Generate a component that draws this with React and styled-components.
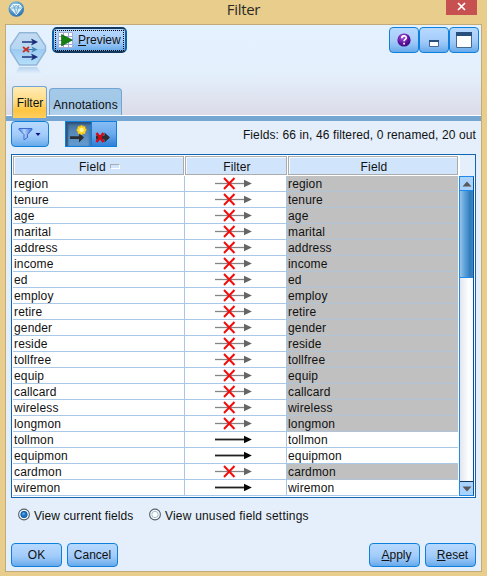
import React from 'react';
import styled, { createGlobalStyle, css } from 'styled-components';

const Global = createGlobalStyle`
  * { box-sizing: border-box; }
  body { margin: 0; background: #e8cd8c; }
  svg { display: block; flex: none; }
`;

const Window = styled.div`
  width: 487px;
  height: 576px;
  background: #e8cd8c;
  padding: 0 5px 4px;
  font: 12px/14px 'Liberation Sans', Arial, sans-serif;
  color: #111;
  display: flex;
  flex-direction: column;
  overflow: hidden;
`;

const TitleBar = styled.header`
  height: 24px;
  flex: none;
  display: grid;
  grid-template-columns: 31px 1fr 31px;
  align-items: start;
`;
const Logo = styled.div`
  padding: 1px 0 0 3px;
`;
const Title = styled.h1`
  margin: 0;
  font: 15px/18px 'Open Sans', 'Noto Sans', sans-serif;
  letter-spacing: -0.3px;
  text-align: center;
  color: #2c2a26;
`;
const Close = styled.button`
  width: 31px;
  height: 15px;
  border: 0;
  padding: 0 0 3px 11px;
  margin-left: -5px;
  background: #c75050;
`;

const Panel = styled.main`
  width: 477px;
  height: 548px;
  border: 1px solid #c3ab79;
  background: #e4effb;
  display: flex;
  flex-direction: column;
`;

const Top = styled.section`
  height: 91px;
  flex: none;
  display: flex;
  flex-direction: column;
  justify-content: space-between;
  background: linear-gradient(#e4f1fe 0, #e4effc 55%, #dcdbe8 100%);
  border-bottom: 1px solid #fff;
`;
const TopRow = styled.div`
  display: flex;
  padding: 2px 2px 0 3px;
`;
const NodeIcon = styled.div`
  width: 43px;
  height: 44px;
  padding: 4px 0 0;
`;
const Spacer = styled.div`
  flex: 1;
`;

const Button = styled.button`
  width: ${(p) => p.$w}px;
  height: ${(p) => p.$h}px;
  padding: ${(p) => p.$pad || '0'};
  display: flex;
  align-items: center;
  justify-content: center;
  font: inherit;
  color: #111;
  border: 1px solid #0d80dc;
  border-radius: 4px;
  background: linear-gradient(#b7d9ff 0%, #a5cdfa 50%, #8fc1f5 72%, #66a9ea 100%);
`;
const PreviewButton = styled(Button)`
  border: 2px solid #12385f;
  border-left-color: #0d62ad;
  border-right-color: #0d62ad;
  border-radius: 5px;
`;
const Focus = styled.span`
  width: 69px;
  height: 21px;
  border: 1px dotted #000;
  display: flex;
  align-items: center;
  gap: 4px;
  padding-left: 2px;
`;
const WindowButtons = styled.div`
  display: flex;
`;

const Tabs = styled.nav`
  display: flex;
  align-items: flex-end;
  padding-left: 6px;
  gap: 2px;
`;
const Tab = styled.div`
  display: flex;
  justify-content: center;
  border: 1px solid #70a5d5;
  border-bottom: 0;
  ${(p) =>
    p.$active
      ? css`
          width: 35px;
          height: 32px;
          margin-bottom: -3px;
          padding: 9px 0 0 1px;
          border-radius: 3px 3px 0 0;
          background: linear-gradient(#ffebb4, #ffdc84 45%, #ffc541 75%, #ffce5e);
          position: relative;
        `
      : css`
          width: 73px;
          height: 27px;
          padding-top: 9px;
          letter-spacing: 0.1px;
          border-radius: 4px 4px 0 0;
          background: linear-gradient(#a5cae9, #a1c7e7 60%, #b4d3ec);
        `}
`;
const Band = styled.div`
  height: 5px;
  flex: none;
  background: #74a5d3;
`;

const Toolbar = styled.div`
  height: 33px;
  flex: none;
  display: flex;
  padding: 0 5px;
`;
const ToggleGroup = styled.div`
  display: flex;
  width: 52px;
  height: 26px;
  margin-left: 16px;
  border: 1px solid #0c7fe0;
`;
const Toggle = styled.button`
  flex: 1;
  border: 0;
  padding: 0;
  background: ${(p) =>
    p.$on
      ? 'linear-gradient(#416991, #5387b9 40%, #659ed2)'
      : 'linear-gradient(#86bdf4, #6aaaec 50%, #2f7ed8)'};
  box-shadow: ${(p) => (p.$on ? 'inset 2px 2px 2px #2d5278, inset -2px 0 2px #4476a8' : 'inset 1px 0 #0c7fe0')};
`;
const Summary = styled.div`
  margin: 7px 0 0 auto;
  white-space: nowrap;
  letter-spacing: 0.11px;
`;

const Table = styled.section`
  width: 465px;
  height: 344px;
  flex: none;
  margin-left: 5px;
  border: 1px solid #1166b4;
  background: #fff;
  display: flex;
`;
const Grid = styled.div`
  width: 447px;
  padding-left: 1px;
`;
const HeaderRow = styled.div`
  height: 21px;
  padding-top: 1px;
  display: grid;
  grid-template-columns: 171px 102px 170px;
  gap: 1px;
`;
const HeaderCell = styled.div`
  height: 19px;
  border: 1px solid #acacac;
  box-shadow: inset 1px 1px #f5faff;
  background: #d0e4fc;
  letter-spacing: 0.15px;
  padding: 2px 0 0 2px;
  display: flex;
  align-items: center;
  justify-content: center;
  gap: 4px;
`;
const SortMark = styled.i`
  width: 10px;
  height: 5px;
  border: 1px solid #a9adb3;
  border-right-color: #fff;
  border-bottom-color: #fff;
`;
const Row = styled.div`
  height: 16px;
  display: grid;
  grid-template-columns: 172px 102px 171px;
`;
const Cell = styled.div`
  height: 16px;
  border-right: ${(p) => (p.$last ? '0' : '1px solid #a9c8e6')};
  border-bottom: 1px solid ${(p) => (p.$filtered ? '#b1c5d9' : '#a9c8e6')};
  background: ${(p) => (p.$filtered ? '#c0c0c0' : '#fff')};
  padding-left: 1px;
  line-height: 16px;
  letter-spacing: 0.15px;
`;
const ArrowCell = styled(Cell)`
  padding-left: 29px;
`;

const Scroll = styled.aside`
  width: 16px;
  display: flex;
  flex-direction: column;
`;
const ScrollCorner = styled.div`
  height: 21px;
  flex: none;
  background: #e4effb;
  border-left: 1px solid #fff;
`;
const ScrollTrack = styled.div`
  height: 320px;
  width: 15px;
  border: 1px solid #1e8aee;
  border-right-color: #0f4f8c;
  background: linear-gradient(90deg, #e2e6ed, #fff 70%, #f3f5f8);
  display: flex;
  flex-direction: column;
`;
const ScrollArrow = styled.div`
  height: 14px;
  background: #a9d2fc;
  display: flex;
  align-items: center;
  justify-content: center;
  border-top: ${(p) => (p.$down ? '1px solid #12385f' : '0')};
  border-bottom: ${(p) => (p.$down ? '0' : '1px solid #1e8aee')};
`;
const ScrollThumb = styled.div`
  height: 87px;
  background: linear-gradient(90deg, #94c4ea, #5fa3da 35%, #2f79bd 80%, #3c86c8);
  border-bottom: 1px solid #1e8aee;
`;

const Options = styled.div`
  display: flex;
  padding: 10px 0 0 12px;
  height: 45px;
  flex: none;
`;
const Option = styled.label`
  display: flex;
  gap: 4px;
  line-height: 17px;
  width: ${(p) => p.$w}px;
  white-space: nowrap;
  letter-spacing: ${(p) => p.$ls || 0}px;
`;
const Footer = styled.footer`
  display: flex;
  gap: 5px;
  padding: 0 5px;
`;

const Logotype = () => (
  <svg width="17" height="17" viewBox="0 0 17 17">
    <defs>
      <radialGradient id="lg" cx=".4" cy=".3" r=".8">
        <stop offset="0" stopColor="#9ad2f1" />
        <stop offset="1" stopColor="#1a66a9" />
      </radialGradient>
    </defs>
    <circle cx="8.3" cy="8" r="7.8" fill="url(#lg)" />
    <path d="M5 3.5h6.5L14 6.7 8.3 13.7 2.5 6.7Z" fill="#d8edf7" stroke="#fff" />
    <path d="M3 7h11M5.5 4 8.3 13 11 4M6 7l2.3-3 2.3 3" fill="none" stroke="#5fa3c9" strokeWidth=".8" />
  </svg>
);

const FilterNode = () => (
  <svg width="38" height="44" viewBox="0 0 38 44">
    <defs>
      <linearGradient id="hx" x2="0" y2="1">
        <stop offset="0" stopColor="#c5daf1" />
        <stop offset=".5" stopColor="#b4d7f3" />
        <stop offset=".52" stopColor="#9dcaf0" />
        <stop offset="1" stopColor="#b4e0fb" />
      </linearGradient>
      <linearGradient id="rf" x2="0" y2="1">
        <stop offset="0" stopColor="#b8d4ee" />
        <stop offset="1" stopColor="#e4f0fc" />
      </linearGradient>
    </defs>
    <path d="M10 36h18l5 7H6Z" fill="url(#rf)" />
    <path d="M10.5 1.7h17l9 13.3v5L27.5 34h-17L1.5 20v-5Z" fill="url(#hx)" stroke="#91b5d9" strokeWidth="1.4" />
    <path d="M13 11h11M13 26h11" stroke="#20357e" strokeWidth="1.3" />
    <path d="M22.5 8l6 3-6 3 1.5-3ZM22.5 23l6 3-6 3 1.5-3Z" fill="#182a78" stroke="#182a78" strokeWidth=".5" />
    <path d="M18 18.5h8" stroke="#377cae" />
    <path d="M22.5 15.5l6 3-6 3 1.5-3Z" fill="#4385b4" />
    <path d="M14 16l6 5M20 16l-6 5" stroke="#c63229" strokeWidth="1.8" />
  </svg>
);

const PreviewIcon = () => (
  <svg width="16" height="16" viewBox="0 0 16 16">
    <path d="M.5.5h14v15H.5Z" fill="#fff" stroke="#a5aed4" />
    <path d="M1 4.5h13M1 8.5h13M1 12.5h13M5.5 1v14M10.5 1v14" stroke="#9da8d3" />
    <path d="M3.5 2.5 14.5 8 3.5 14Z" fill="#148112" stroke="#0b5c0d" strokeWidth=".6" />
  </svg>
);

const HelpIcon = () => (
  <svg width="14" height="14" viewBox="0 0 14 14">
    <defs>
      <radialGradient id="hp" cx=".4" cy=".3" r=".8">
        <stop offset="0" stopColor="#a855d8" />
        <stop offset=".6" stopColor="#5c119d" />
        <stop offset="1" stopColor="#32076b" />
      </radialGradient>
    </defs>
    <circle cx="7" cy="7" r="6.6" fill="url(#hp)" />
    <path d="M4.8 5.2c0-3 4.5-3 4.5-.4 0 1.7-2.2 1.6-2.2 3.4M7.1 9.8v1.6" fill="none" stroke="#fff" strokeWidth="1.7" />
  </svg>
);

const MinimizeIcon = () => (
  <svg width="10" height="7" viewBox="0 0 10 7">
    <path d="M.5.5h9v6h-9Z" fill="#fff" stroke="#47688e" />
    <path d="M0 0h10v2H0Z" fill="#294f7c" />
  </svg>
);

const MaximizeIcon = () => (
  <svg width="16" height="16" viewBox="0 0 16 16">
    <path d="M.5.5h15v15H.5Z" fill="#fff" stroke="#47688e" />
    <path d="M0 0h16v4H0Z" fill="#294f7c" />
  </svg>
);

const FunnelIcon = () => (
  <svg width="24" height="14" viewBox="0 0 24 14">
    <defs>
      <linearGradient id="fn">
        <stop offset="0" stopColor="#4d83e2" />
        <stop offset=".4" stopColor="#b4d3fc" />
        <stop offset="1" stopColor="#3c70d6" />
      </linearGradient>
    </defs>
    <path d="M1 1.5h13v1L9.5 7.5v3L6 12.8V7.5L1 2.5Z" fill="url(#fn)" stroke="#3c6bd0" />
    <path d="M17.5 6h5L20 9Z" fill="#10108c" />
  </svg>
);

const KeepIcon = () => (
  <svg width="25" height="24" viewBox="0 0 25 24">
    <path d="M4 14.2h9V11l5 4.5-5 5v-3.5H4Z" fill="#2d2e31" />
    <circle cx="15.5" cy="8" r="4.8" fill="#ffb41f" opacity=".7" />
    <path d="m15.5 3 1.3 2 2.4-.8-.4 2.4 2 1.4-2 1.6.4 2.3-2.4-.6-1.3 1.8-1.4-1.8-2.3.6.4-2.3-2-1.6 2-1.4-.4-2.4 2.4.8Z" fill="#ffd51b" />
    <circle cx="15.5" cy="8" r="2.3" fill="#fff59a" />
  </svg>
);

const DropIcon = () => (
  <svg width="25" height="24" viewBox="0 0 25 24">
    <path d="M5 13.5h8.5v-3l5.5 5-5.5 5V17.5H5Z" fill="#2d2e35" />
    <path d="M5.5 11l7 9M12.5 11l-7 9" stroke="#d80812" strokeWidth="2.4" />
  </svg>
);

const FilterArrow = ({ filtered }) => (
  <svg width="40" height="15" viewBox="0 0 40 15">
    <path d="M1 7.5h31" stroke={filtered ? '#858585' : '#202020'} strokeWidth={filtered ? 1.3 : 1.8} />
    <path d="M30 3.8 37.8 7.5 30 11.2Z" fill={filtered ? '#656565' : '#080808'} />
    {filtered && <path d="M10 2l10.5 11M20.5 2 10 13" stroke="#f20d0d" strokeWidth="2" />}
  </svg>
);

const Radio = ({ on }) => (
  <svg width="12" height="13" viewBox="0 0 12 13">
    <circle cx="6" cy="6.5" r="5.4" fill="#f5f9fc" stroke="#56616a" strokeWidth="1.1" />
    <circle cx="6" cy="6.5" r="3.2" fill={on ? '#1874cc' : '#fff'} stroke={on ? '#185d9f' : '#9dc0d8'} strokeWidth="1" />
    {on && <circle cx="5.5" cy="5.7" r="1.3" fill="#5ba7ec" />}
  </svg>
);

const Triangle = ({ down }) => (
  <svg width="10" height="6" viewBox="0 0 10 6">
    <path d={down ? 'M.5.5h9L5 5.5Z' : 'M.5 5.5h9L5 .5Z'} fill="#59595b" />
  </svg>
);

const fields = [
  'region', 'tenure', 'age', 'marital', 'address', 'income', 'ed', 'employ', 'retire', 'gender',
  'reside', 'tollfree', 'equip', 'callcard', 'wireless', 'longmon', 'tollmon', 'equipmon', 'cardmon', 'wiremon',
];
const kept = new Set(['tollmon', 'equipmon', 'wiremon']);

export default function App() {
  return (
    <Window>
      <Global />
      <TitleBar>
        <Logo><Logotype /></Logo>
        <Title>Filter</Title>
        <Close aria-label="Close">
          <svg width="9" height="9" viewBox="0 0 9 9"><path d="M1 1l7 7M8 1 1 8" stroke="#fff" strokeWidth="1.7" /></svg>
        </Close>
      </TitleBar>
      <Panel>
        <Top>
          <TopRow>
            <NodeIcon><FilterNode /></NodeIcon>
            <PreviewButton $w={75} $h={26}>
              <Focus><PreviewIcon /><span><u>P</u>review</span></Focus>
            </PreviewButton>
            <Spacer />
            <WindowButtons>
              <Button $w={30} $h={26} aria-label="Help"><HelpIcon /></Button>
              <Button $w={30} $h={26} $pad="7px 0 0" aria-label="Minimize"><MinimizeIcon /></Button>
              <Button $w={30} $h={26} aria-label="Maximize"><MaximizeIcon /></Button>
            </WindowButtons>
          </TopRow>
          <Tabs>
            <Tab $active>Filter</Tab>
            <Tab>Annotations</Tab>
          </Tabs>
        </Top>
        <Band />
        <Toolbar>
          <Button $w={38} $h={26} aria-label="Filter options"><FunnelIcon /></Button>
          <ToggleGroup>
            <Toggle $on aria-label="Keep new fields"><KeepIcon /></Toggle>
            <Toggle aria-label="Drop new fields"><DropIcon /></Toggle>
          </ToggleGroup>
          <Summary>Fields: 66 in, 46 filtered, 0 renamed, 20 out</Summary>
        </Toolbar>
        <Table>
          <Grid>
            <HeaderRow>
              <HeaderCell>Field <SortMark /></HeaderCell>
              <HeaderCell>Filter</HeaderCell>
              <HeaderCell>Field</HeaderCell>
            </HeaderRow>
            {fields.map((f) => (
              <Row key={f}>
                <Cell>{f}</Cell>
                <ArrowCell><FilterArrow filtered={!kept.has(f)} /></ArrowCell>
                <Cell $last $filtered={!kept.has(f)}>{f}</Cell>
              </Row>
            ))}
          </Grid>
          <Scroll>
            <ScrollCorner />
            <ScrollTrack>
              <ScrollArrow><Triangle /></ScrollArrow>
              <ScrollThumb />
              <Spacer />
              <ScrollArrow $down><Triangle down /></ScrollArrow>
            </ScrollTrack>
          </Scroll>
        </Table>
        <Options>
          <Option $w={131} $ls={0.08}><Radio on />View current fields</Option>
          <Option $w={170} $ls={0.2}><Radio />View unused field settings</Option>
        </Options>
        <Footer>
          <Button $w={51} $h={24}>OK</Button>
          <Button $w={51} $h={24}>Cancel</Button>
          <Spacer />
          <Button $w={51} $h={24} $pad="0 0 0 4px"><span><u>A</u>pply</span></Button>
          <Button $w={51} $h={24} $pad="0 0 0 4px"><span><u>R</u>eset</span></Button>
        </Footer>
      </Panel>
    </Window>
  );
}
